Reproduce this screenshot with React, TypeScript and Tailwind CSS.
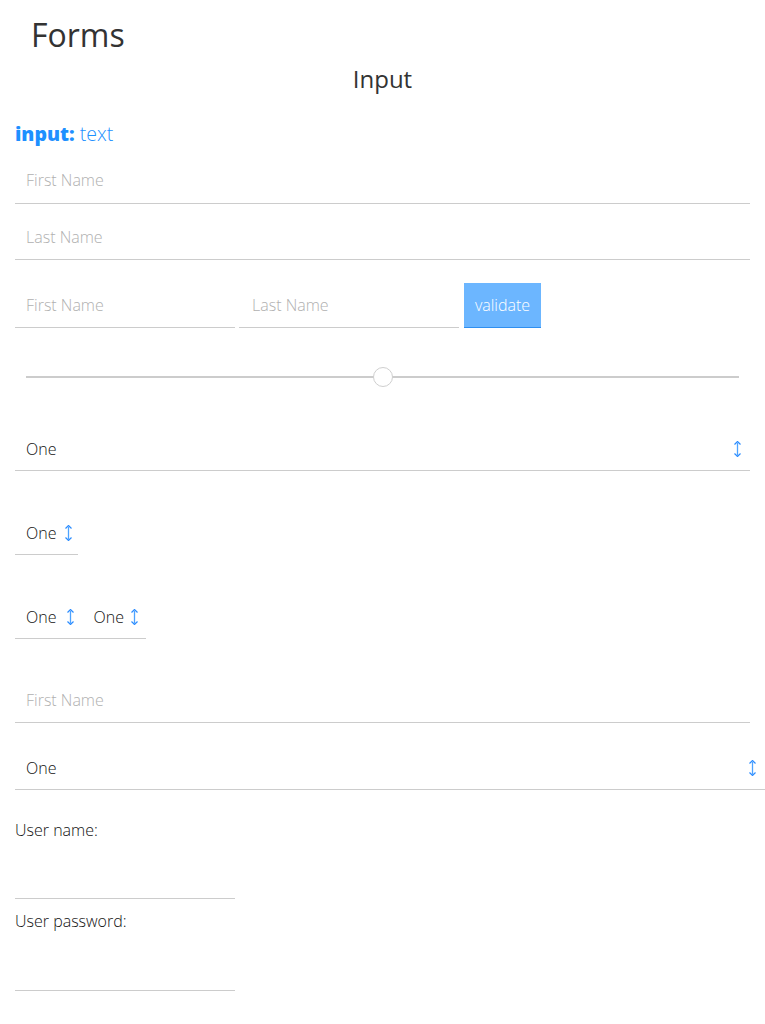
import React from "react";

const font = { fontFamily: '"Open Sans", "Liberation Sans", sans-serif' };

function Arrows({ className = "" }: { className?: string }) {
  return (
    <svg width="7" height="16" viewBox="0 0 7 16" className={className} fill="none">
      <line x1="3.5" y1="2" x2="3.5" y2="14" stroke="#4da3ff" strokeWidth="1.3" />
      <path d="M0.5 3.5 L3.5 0.5 L6.5 3.5" stroke="#2b8cff" strokeWidth="1.2" />
      <path d="M0.5 12.5 L3.5 15.5 L6.5 12.5" stroke="#2b8cff" strokeWidth="1.2" />
    </svg>
  );
}

function TextInput({ placeholder, className = "" }: { placeholder?: string; className?: string }) {
  return (
    <input
      placeholder={placeholder}
      className={`h-[44px] border-b border-[#cccccc] bg-transparent pl-[11px] text-[16px] font-light text-[#222] outline-none placeholder:text-[#b0b0b0] ${className}`}
      style={font}
    />
  );
}

export default function App() {
  return (
    <div className="min-h-[1024px] w-full bg-white text-[#333]" style={font}>
      <h1 className="pl-[31px] pt-[15px] text-[32px] leading-[40px] font-normal text-[#333]">Forms</h1>
      <h2 className="mt-[8px] text-center text-[24px] leading-[32px] font-normal text-[#333]">Input</h2>
      <div className="px-[15px]">
        <div className="mt-[26px] text-[19.5px] leading-[26px] text-[#1e90ff]">
          <span className="font-extrabold">input:</span> <span className="font-light">text</span>
        </div>
        <TextInput placeholder="First Name" className="mt-[13px] block w-full pb-[4px]" />
        <TextInput placeholder="Last Name" className="mt-[12px] block w-full pb-[2px]" />
        <div className="mt-[23px] flex items-stretch">
          <TextInput placeholder="First Name" className="h-[45px] w-[220px]" />
          <TextInput placeholder="Last Name" className="ml-[4px] h-[45px] w-[220px] pl-[13px]" />
          <button
            className="ml-[5px] h-[45px] w-[77px] border-b border-[#2f8ff0] bg-[#6cb6ff] text-[16px] font-light text-white"
            style={font}
          >
            validate
          </button>
        </div>
        <div className="mt-[32px] flex h-[34px] items-center px-[11px]">
          <div className="relative h-[2px] w-full bg-[#cccccc]">
            <div className="absolute left-1/2 top-1/2 h-[20px] w-[20px] -translate-x-1/2 -translate-y-1/2 rounded-full border border-[#cfcfcf] bg-white" />
          </div>
        </div>
        <div className="mt-[33px] flex h-[44px] items-center justify-between border-b border-[#cccccc] pl-[11px] pr-[9px] text-[16px] font-light text-[#111]">
          <span>One</span>
          <Arrows />
        </div>
        <div className="mt-[40px] flex h-[44px] w-[63px] items-center border-b border-[#cccccc] pl-[11px] text-[16px] font-light text-[#111]">
          <span>One</span>
          <Arrows className="ml-[9px]" />
        </div>
        <div className="mt-[40px] flex h-[44px] w-[131px] items-center border-b border-[#cccccc] pl-[11px] text-[16px] font-light text-[#111]">
          <span>One</span>
          <Arrows className="ml-[11px]" />
          <span className="ml-[19px]">One</span>
          <Arrows className="ml-[7px]" />
        </div>
        <TextInput placeholder="First Name" className="mt-[40px] block w-full pb-[2px]" />
      </div>
      <div className="pl-[15px]">
        <div className="mt-[23px] flex h-[44px] items-center justify-between border-b border-[#cccccc] pl-[11px] pr-[9px] text-[16px] font-light text-[#111]">
          <span>One</span>
          <Arrows />
        </div>
      </div>
      <div className="px-[15px]">
        <div className="mt-[28px] text-[16px] leading-[24px] font-light text-[#111]">User name:</div>
        <TextInput className="mt-[13px] block w-[220px]" />
        <div className="mt-[10px] text-[16px] leading-[24px] font-light text-[#111]">User password:</div>
        <TextInput className="mt-[14px] block w-[220px]" />
      </div>
    </div>
  );
}
